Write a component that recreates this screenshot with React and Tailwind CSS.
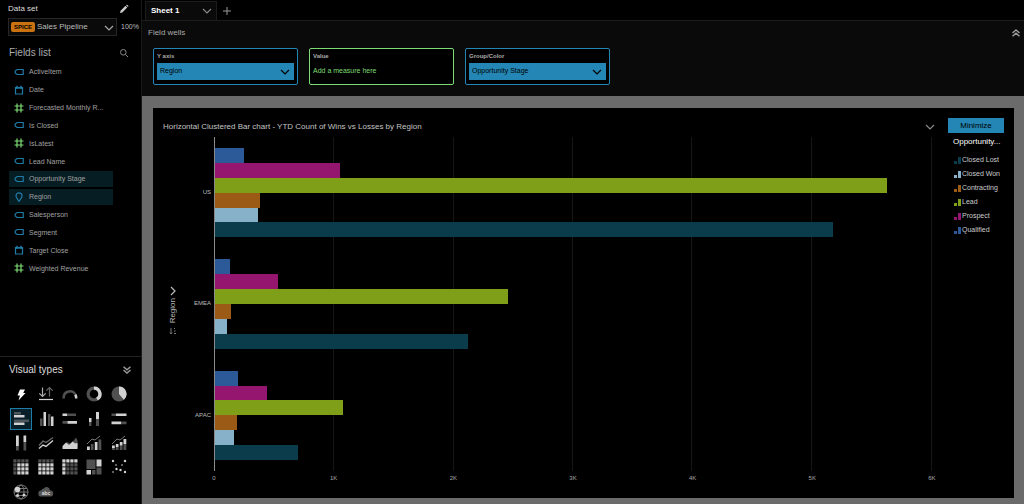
import { useState } from 'react';

const FIELDS = [
  { name: 'ActiveItem', type: 'text' },
  { name: 'Date', type: 'date' },
  { name: 'Forecasted Monthly R...', type: 'number' },
  { name: 'Is Closed', type: 'text' },
  { name: 'IsLatest', type: 'number' },
  { name: 'Lead Name', type: 'text' },
  { name: 'Opportunity Stage', type: 'text', selected: true },
  { name: 'Region', type: 'geo', selected: true },
  { name: 'Salesperson', type: 'text' },
  { name: 'Segment', type: 'text' },
  { name: 'Target Close', type: 'date' },
  { name: 'Weighted Revenue', type: 'number' },
];

// Bars are drawn top to bottom in this order
const STAGES = [
  { name: 'Qualified', color: '#2c5a98' },
  { name: 'Prospect', color: '#94166f' },
  { name: 'Lead', color: '#7f9f18' },
  { name: 'Contracting', color: '#9c5a17' },
  { name: 'Closed Won', color: '#87b1c9' },
  { name: 'Closed Lost', color: '#0b3c4c' },
];

const REGIONS = [
  { name: 'US', values: [245, 1050, 5620, 380, 362, 5170] },
  { name: 'EMEA', values: [125, 525, 2455, 130, 103, 2120] },
  { name: 'APAC', values: [195, 435, 1070, 183, 157, 693] },
];

const TICKS = ['0', '1K', '2K', '3K', '4K', '5K', '6K'];
const MAX = 6000;

const L = '#d2d2d2';
const D = '#505050';

function Chevron({ className }) {
  return (
    <svg viewBox="0 0 10 6" className={className} fill="none" stroke="currentColor" strokeWidth="1.2" aria-hidden="true">
      <path d="M1 1l4 4 4-4" />
    </svg>
  );
}

function DoubleChevron({ className }) {
  return (
    <svg viewBox="0 0 10 8" className={className} fill="none" stroke="currentColor" strokeWidth="1.5" aria-hidden="true">
      <path d="M1.500 .8L5 3.800 8.500 .8M1.500 4L5 7l3.500-3" />
    </svg>
  );
}

function FieldIcon({ type }) {
  if (type === 'number') {
    return (
      <svg viewBox="0 0 10 10" className="size-2.5 text-[#7ddc74]" fill="none" stroke="currentColor" strokeWidth="1.2" aria-hidden="true">
        <path d="M3 .5v9M7 .5v9M.5 3h9M.5 7h9" />
      </svg>
    );
  }
  if (type === 'date') {
    return (
      <svg viewBox="0 0 10 10" className="size-2.5 text-[#1f7ba8]" fill="none" stroke="currentColor" aria-hidden="true">
        <path d="M1.500 2.500h7v6.500h-7z" strokeWidth="1.200" />
        <path d="M1 3.200h8" />
        <path d="M3 .8v3M7 .8v3" strokeWidth="1.500" />
      </svg>
    );
  }
  if (type === 'geo') {
    return (
      <svg viewBox="0 0 10 10" className="size-2.5 text-[#1f7ba8]" fill="none" stroke="currentColor" strokeWidth="1.200" aria-hidden="true">
        <path d="M5 9.300C3.700 7.300 2 5.700 2 3.800a3 3 0 0 1 6 0C8 5.700 6.300 7.300 5 9.300z" />
      </svg>
    );
  }
  return (
    <svg viewBox="0 0 10 10" className="size-2.5 text-[#1f7ba8]" fill="none" stroke="currentColor" strokeWidth="1.200" aria-hidden="true">
      <path d="M3.200 2.500h6v5h-6L1.200 6V4z" />
    </svg>
  );
}

function Dots({ rows }) {
  return rows.flatMap((row, y) =>
    row.split('').map((c, x) => (
      <rect key={`${x}-${y}`} x={x * 4 + 0.3} y={y * 4 + 0.3} width="3.200" height="3.200" fill={c === 'L' ? L : D} />
    ))
  );
}

const VISUALS = [
  {
    name: 'AutoGraph',
    art: <path d="M7 3.500h5L10.200 7H12.500L5.500 14.500l1.500-5H4.500z" fill="#fff" />,
  },
  {
    name: 'KPI',
    art: (
      <>
        <path d="M4.500 1.500v9M1.300 7.300l3.200 3.200 3.200-3.200" fill="none" stroke="#aaa" strokeWidth="1.200" />
        <path d="M11.500 10.500v-9M8.300 4.700l3.200-3.200 3.200 3.200" fill="none" stroke="#666" strokeWidth="1.200" />
        <path d="M1 13.500h14" stroke={L} strokeWidth="1.200" />
      </>
    ),
  },
  {
    name: 'Gauge chart',
    art: (
      <>
        <path d="M1.800 12.500a6.300 6.300 0 0 1 11.400-4.500" fill="none" stroke={D} strokeWidth="2.500" />
        <path d="M13.200 8.500A6.300 6.300 0 0 1 14.200 12.500" fill="none" stroke={L} strokeWidth="2.500" />
      </>
    ),
  },
  {
    name: 'Donut chart',
    art: (
      <>
        <circle cx="8" cy="8" r="5.900" fill="none" stroke={D} strokeWidth="3.300" />
        <path d="M8 2.100A5.900 5.900 0 0 1 11 13.100" fill="none" stroke={L} strokeWidth="3.300" />
      </>
    ),
  },
  {
    name: 'Pie chart',
    art: (
      <>
        <circle cx="8" cy="8" r="7.500" fill={D} />
        <path d="M8 8V.5A7.500 7.500 0 0 1 12.900 13.700z" fill={L} />
      </>
    ),
  },
  {
    name: 'Horizontal bar chart',
    art: (
      <>
        <path d="M1 1h7v2.500H1zM1 8.500h15V11H1z" fill="#4d565a" />
        <path d="M1 4h10.500v2.500H1zM1 11.500h10.500V14H1z" fill={L} />
      </>
    ),
  },
  {
    name: 'Vertical bar chart',
    art: (
      <>
        <path d="M2 7.500h2.500V15H2zM10 3h2.500v12H10z" fill={D} />
        <path d="M5.500 1H8v14H5.500zM13 5.500h2.500V15H13z" fill={L} />
      </>
    ),
  },
  {
    name: 'Horizontal stacked bar chart',
    art: (
      <>
        <path d="M5 2.500h9V5H5zM.5 10h5v2.800h-5z" fill={D} />
        <path d="M.5 2.500H5V5H.5zM5.500 10h9.500v2.800H5.500z" fill={L} />
      </>
    ),
  },
  {
    name: 'Vertical stacked bar chart',
    art: (
      <>
        <path d="M3 11h2.500v4H3zM10 8h3v7h-3z" fill={D} />
        <path d="M3 7h2.500v4H3zM10 1h3v7h-3z" fill={L} />
      </>
    ),
  },
  {
    name: 'Horizontal stacked 100% bar chart',
    art: (
      <>
        <path d="M.5 2.500H5V5H.5zM10 10.500h5.500v2.700H10z" fill={D} />
        <path d="M5 2.500h10.500V5H5zM.5 10.500H10v2.700H.5z" fill={L} />
      </>
    ),
  },
  {
    name: 'Vertical stacked 100% bar chart',
    art: (
      <>
        <path d="M3 11h2.800v4.500H3zM10.500 7h2.700v8.500h-2.700z" fill={D} />
        <path d="M3 .5h2.800V11H3zM10.500 .5h2.700V7h-2.700z" fill={L} />
      </>
    ),
  },
  {
    name: 'Line chart',
    art: (
      <>
        <path d="M1 10.500L5 6l3 1.500L15 2.500" fill="none" stroke="#6a6a6a" strokeWidth="1.300" />
        <path d="M1 13.500L5 10l3 1.500L15 5.500" fill="none" stroke={L} strokeWidth="1.400" />
      </>
    ),
  },
  {
    name: 'Area line chart',
    art: (
      <>
        <path d="M1 12l4-5 4 2 5-6.500 1.500 3V13H1z" fill={D} />
        <path d="M.5 14v-3L4 7.500 7 10l3.500-3.500L13 8.500l2.500-.5v6z" fill={L} />
      </>
    ),
  },
  {
    name: 'Clustered bar combo chart',
    art: (
      <>
        <path d="M1 9l5-5 3 1 5-4" fill="none" stroke="#777" />
        <path d="M4.800 9h2.700v6H4.800zM12.500 4.500h2.800V15h-2.800z" fill={D} />
        <path d="M1 11.500h2.800V15H1zM8.800 7h2.700v8H8.800z" fill={L} />
      </>
    ),
  },
  {
    name: 'Stacked bar combo chart',
    art: (
      <>
        <path d="M1 9l5-5 3 1 5-4" fill="none" stroke="#777" />
        <path d="M1 13h2.800v2H1zM4.800 12h2.700v3H4.800zM8.800 10.500h2.700V15H8.800zM12.500 9h2.800v6h-2.800z" fill={D} />
        <path d="M1 10.500h2.800V13H1zM4.800 9h2.700v3H4.800zM8.800 7h2.700v3.500H8.800zM12.500 4h2.800v5h-2.800z" fill={L} />
      </>
    ),
  },
  { name: 'Pivot table', art: <Dots rows={['DDDD', 'DLLL', 'DLLL', 'DLLL']} /> },
  { name: 'Table', art: <Dots rows={['DDDD', 'LLLL', 'LLLL', 'LLLL']} /> },
  { name: 'Heat map', art: <Dots rows={['LLLL', 'LDDD', 'LDDD', 'LDDD']} /> },
  {
    name: 'Tree map',
    art: (
      <>
        <path d="M.5 .5h9v9.500h-9zM6 11h3.500v4.500H6zM10.500 8.500h5v7h-5z" fill={D} />
        <path d="M10.500 .5h5v7h-5zM.5 11H5v4.500H.5z" fill={L} />
      </>
    ),
  },
  {
    name: 'Scatter plot',
    art: (
      <>
        <g fill={L}>
          <circle cx="2" cy="2" r="1.200" />
          <circle cx="14" cy="2" r="1.200" />
          <circle cx="5.500" cy="10" r="1.200" />
          <circle cx="9.500" cy="11" r="1.200" />
          <circle cx="14" cy="13" r="1.200" />
        </g>
        <g fill="#777">
          <circle cx="5" cy="6" r="1.100" />
          <circle cx="11" cy="6" r="1.100" />
          <circle cx="2" cy="13" r="1.100" />
        </g>
      </>
    ),
  },
  {
    name: 'Points on map',
    art: (
      <>
        <g fill="none" stroke="#777">
          <circle cx="8" cy="8" r="7" />
          <ellipse cx="8" cy="8" rx="3" ry="7" />
          <path d="M1 8h14M2 4.500h12M2 11.500h12" />
        </g>
        <g fill={L}>
          <circle cx="4.500" cy="5.500" r="2.800" />
          <circle cx="4.500" cy="11.500" r="1.500" />
          <circle cx="11" cy="11" r="1.500" />
        </g>
      </>
    ),
  },
  {
    name: 'Word cloud',
    art: (
      <>
        <path d="M3.500 12.500a3 3 0 0 1-.3-6A3 3 0 0 1 6 4.500a3.300 3.300 0 0 1 6 2 3 3 0 0 1 .5 6z" fill="#555" />
        <text x="8" y="11.300" fill="#ddd" fontSize="5" fontWeight="bold" textAnchor="middle">abc</text>
      </>
    ),
  },
];

function FieldWell({ id, label, value }) {
  return (
    <div className="w-[145px] rounded-xs border border-[#2486b4] bg-black px-[3px] pb-1">
      <label htmlFor={id} className="block py-0.5 text-[6px] leading-[10px] font-bold text-[#aaa]">{label}</label>
      <div className="relative">
        <select id={id} className="block h-[17px] w-full appearance-none bg-[#2486b4] pr-4 pl-[3px] text-[7px] text-black outline-none">
          <option>{value}</option>
        </select>
        <Chevron className="pointer-events-none absolute top-1.5 right-1 w-2.5 text-black" />
      </div>
    </div>
  );
}

function Sidebar() {
  const [visual, setVisual] = useState('Horizontal bar chart');

  return (
    <aside className="flex w-[142px] shrink-0 flex-col border-r border-[#1a1a1a]">
      {/* Data set */}
      <div className="flex h-[18px] items-center justify-between pr-3 pl-2">
        <label htmlFor="data-set" className="text-[8px] text-[#ddd]">Data set</label>
        <button type="button" aria-label="Edit data set" className="text-[#ccc]">
          <svg viewBox="0 0 10 10" className="size-2.5" fill="currentColor" aria-hidden="true">
            <path d="M1 9l.6-2.300 4.900-4.900 1.700 1.700-4.900 4.900zM7.100 1.200l.8-.7 1.700 1.700-.8.7z" />
          </svg>
        </button>
      </div>
      <div className="flex items-center gap-1 pl-2">
        <div className="relative flex h-[18px] w-[109px] items-center gap-0.5 border border-[#262626] bg-[#0a0a0a] pl-0.5">
          <span className="rounded-xs bg-[#c9720f] px-[3px] text-[6px] leading-[10px] font-bold text-black">SPICE</span>
          <select id="data-set" className="h-4 min-w-0 flex-1 appearance-none bg-transparent text-[8px] text-[#bbb] outline-none">
            <option>Sales Pipeline</option>
          </select>
          <Chevron className="pointer-events-none absolute top-1.5 right-0.5 w-2.5 text-[#aaa]" />
        </div>
        <span className="text-[7px] text-[#bbb]">100%</span>
      </div>

      {/* Fields */}
      <div className="flex h-[27px] items-center justify-between pt-1.5 pr-3 pl-[9px]">
        <h2 className="text-[10px] text-[#aaa]">Fields list</h2>
        <button type="button" aria-label="Search fields" className="text-[#888]">
          <svg viewBox="0 0 10 10" className="size-2.5" fill="none" stroke="currentColor" aria-hidden="true">
            <circle cx="4.300" cy="4.300" r="2.800" />
            <path d="M6.300 6.300L9 9" />
          </svg>
        </button>
      </div>
      <ul className="flex h-[213px] flex-col gap-0.5 pt-px pr-7 pl-[9px]">
        {FIELDS.map((field) => (
          <li key={field.name} className="flex flex-1">
            <button
              type="button"
              className={`flex w-full items-center gap-[5px] pl-[5px] text-left text-[7px] leading-none text-[#a0a0a0] ${field.selected ? 'bg-[#071d24]' : ''}`}
            >
              <FieldIcon type={field.type} />
              {field.name}
            </button>
          </li>
        ))}
      </ul>

      {/* Visual types */}
      <div className="mt-auto border-t border-[#222]">
        <div className="flex h-[25px] items-center justify-between pr-[9px] pl-[9px]">
          <h2 className="text-[10px] text-[#ddd]">Visual types</h2>
          <button type="button" aria-label="Collapse visual types" className="text-[#999]">
            <DoubleChevron className="w-2.5" />
          </button>
        </div>
        <div className="grid h-[122px] grid-cols-5 grid-rows-5 pr-2.5 pl-[9px]">
          {VISUALS.map((v) => (
            <button
              key={v.name}
              type="button"
              aria-label={v.name}
              onClick={() => setVisual(v.name)}
              className={`flex size-[22px] items-center justify-center self-center justify-self-center border ${visual === v.name ? 'border-[#1f7ba8] bg-[#061f29]' : 'border-transparent'}`}
            >
              <svg viewBox="0 0 16 16" className="size-4" aria-hidden="true">{v.art}</svg>
            </button>
          ))}
        </div>
      </div>
    </aside>
  );
}

function BarChart() {
  return (
    <div className="flex flex-1">
      {/* Axis title */}
      <div className="mb-3.5 flex w-4 flex-col items-center justify-center gap-1 pt-0.5 pl-1 text-[#bbb]">
        <Chevron className="w-2.5 -rotate-90" />
        <span className="rotate-180 text-[8px] leading-[10px] [writing-mode:vertical-rl]">Region</span>
        <svg viewBox="0 0 8 8" className="size-2" fill="none" stroke="#777" aria-hidden="true">
          <path d="M2 1v6M1 5.500L2 7l1-1.500M5 1.500h1M5 4h1.500M5 6.500h2" />
        </svg>
      </div>

      {/* Category labels */}
      <div className="mb-[27px] flex w-[35px] flex-col pr-[3px]">
        {REGIONS.map((region) => (
          <span key={region.name} className="flex flex-1 items-center justify-end text-[6px] text-[#bbb]">{region.name}</span>
        ))}
      </div>

      {/* Bars over the grid lines */}
      <div className="mr-4 flex flex-1 flex-col">
        <div className="relative flex flex-1 flex-col">
          <div className="absolute inset-0 grid grid-cols-6 divide-x divide-[#161616] border-r border-l border-r-[#161616] border-l-[#8a8a8a]">
            {TICKS.slice(1).map((tick) => (
              <div key={tick} />
            ))}
          </div>
          {REGIONS.map((region) => (
            <div key={region.name} className="relative ml-px flex flex-1 flex-col py-[11px]">
              {region.values.map((value, i) => (
                <div
                  key={STAGES[i].name}
                  className="flex-1"
                  style={{ width: `${(value / MAX) * 100}%`, backgroundColor: STAGES[i].color }}
                />
              ))}
            </div>
          ))}
        </div>
        <div className="flex h-[27px] justify-between pt-0.5 text-[6px] leading-[10px] text-[#aaa]">
          {TICKS.map((tick) => (
            <span key={tick} className="flex w-0 justify-center">{tick}</span>
          ))}
        </div>
      </div>
    </div>
  );
}

export default function App() {
  return (
    <div className="flex min-h-screen bg-black font-['Liberation_Sans',Arial,sans-serif] text-[8px]">
      <Sidebar />

      <main className="flex min-w-0 flex-1 flex-col">
        {/* Sheet tabs */}
        <div className="flex h-[21px] items-end border-b border-[#1c1c1c] pl-[3px]">
          <div className="flex h-[19px] w-[72px] items-center justify-between border-x border-t border-[#1c1c1c] bg-[#0a0a0a] pr-1 pl-[5px]">
            <button type="button" className="font-bold text-white">Sheet 1</button>
            <button type="button" aria-label="Sheet menu" className="text-[#888]">
              <Chevron className="w-2.5" />
            </button>
          </div>
          <button type="button" aria-label="Add sheet" className="flex h-[19px] w-5 items-center justify-center text-[#999]">
            <svg viewBox="0 0 8 8" className="size-2" fill="none" stroke="currentColor" aria-hidden="true">
              <path d="M4 0v8M0 4h8" />
            </svg>
          </button>
        </div>

        {/* Field wells */}
        <section className="bg-[#0a0a0a] pb-[11px]">
          <div className="flex h-[27px] items-center justify-between pr-[3px] pl-1.5">
            <h2 className="pb-1 text-[8px] text-[#aaa]">Field wells</h2>
            <button type="button" aria-label="Collapse field wells" className="pb-1 text-[#999]">
              <DoubleChevron className="w-2.5 rotate-180" />
            </button>
          </div>
          <div className="flex gap-[11px] pl-[11px]">
            <FieldWell id="y-axis" label="Y axis" value="Region" />
            <div className="w-[145px] rounded-xs border border-[#7ddc74] bg-black px-[3px]">
              <h3 className="py-0.5 text-[6px] leading-[10px] font-bold text-[#aaa]">Value</h3>
              <button type="button" className="block h-[17px] text-[7px] text-[#7ddc74]">Add a measure here</button>
            </div>
            <FieldWell id="group-color" label="Group/Color" value="Opportunity Stage" />
          </div>
        </section>

        {/* Visual */}
        <div className="flex flex-1 bg-[#6b6b6b] pt-3 pr-2.5 pb-1.5 pl-[11px]">
          <section className="flex flex-1 bg-black px-2.5">
            <div className="flex min-w-0 flex-1 flex-col">
              <div className="flex h-[29px] items-center justify-between pt-2 pr-[13px]">
                <h1 className="text-[8px] text-[#c4c4c4]">Horizontal Clustered Bar chart - YTD Count of Wins vs Losses by Region</h1>
                <button type="button" aria-label="Visual menu" className="text-[#888]">
                  <Chevron className="w-2.5" />
                </button>
              </div>
              <BarChart />
            </div>

            <div className="w-14 pt-2.5">
              <button type="button" className="block h-[15px] w-full bg-[#2486b4] text-[8px] text-black">Minimize</button>
              <h3 className="pt-0.5 pb-[5px] pl-[5px] text-[8px] leading-[13px] text-white">Opportunity...</h3>
              <ul className="pl-1.5">
                {[...STAGES].reverse().map((stage) => (
                  <li key={stage.name} className="flex h-3.5 items-center gap-px text-[7px] whitespace-nowrap text-[#ccc]">
                    <svg viewBox="0 0 7 7" className="size-[7px]" fill={stage.color} aria-hidden="true">
                      <path d="M0 4h3v3H0zM4 0h3v7H4z" />
                    </svg>
                    {stage.name}
                  </li>
                ))}
              </ul>
            </div>
          </section>
        </div>
      </main>
    </div>
  );
}
